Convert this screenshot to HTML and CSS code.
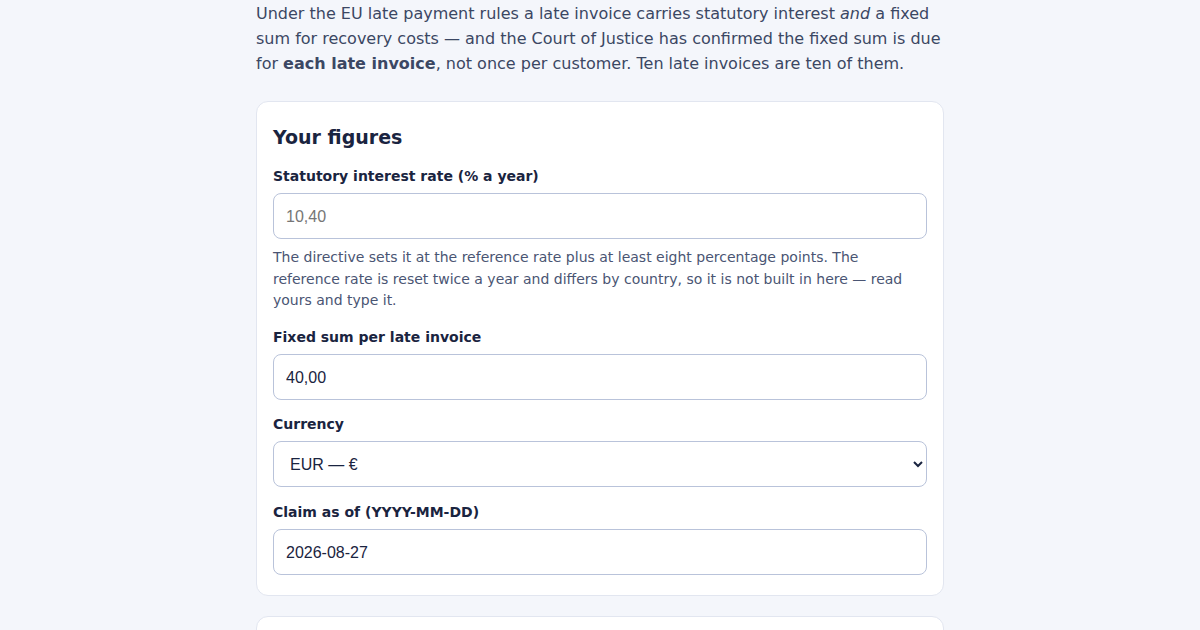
FILE: index.html
```html
<!DOCTYPE html>
<html lang="en">
<head>
    <meta charset="UTF-8">
    <meta name="viewport" content="width=device-width, initial-scale=1.0">
    <title>Late payment claim calculator</title>
    <link rel="stylesheet" href="styles.css">
</head>
<body>
    <main class="page">
        <p class="intro">
            Under the EU late payment rules a late invoice carries statutory interest <em>and</em> a fixed
            sum for recovery costs — and the Court of Justice has confirmed the fixed sum is due
            for <strong>each late invoice</strong>, not once per customer. Ten late invoices are ten of them.
        </p>

        <section class="card">
            <h2>Your figures</h2>

            <div class="field">
                <label for="rate">Statutory interest rate (% a year)</label>
                <input type="text" id="rate" class="control" placeholder="10,40">
                <p class="hint">The directive sets it at the reference rate plus at least eight percentage points. The reference rate is reset twice a year and differs by country, so it is not built in here — read yours and type it.</p>
            </div>

            <div class="field">
                <label for="fixed">Fixed sum per late invoice</label>
                <input type="text" id="fixed" class="control" value="40,00">
            </div>

            <div class="field">
                <label for="currency">Currency</label>
                <select id="currency" class="control">
                    <option>EUR — €</option>
                    <option>GBP — £</option>
                    <option>USD — $</option>
                </select>
            </div>

            <div class="field">
                <label for="asof">Claim as of (YYYY-MM-DD)</label>
                <input type="text" id="asof" class="control" value="2026-08-27">
            </div>
        </section>

        <section class="card"></section>
    </main>
</body>
</html>
```

FILE: styles.css
```css
body {
    margin: 0;
    background: #f4f6fb;
    font-family: "DejaVu Sans", sans-serif;
    color: #1a2440;
}
.page {
    max-width: 688px;
    margin: 0 auto;
    padding-top: 1px;
}
.intro {
    margin: 0 0 25px;
    font-size: 16px;
    line-height: 25px;
    color: #3b4763;
}
.card {
    background: #fff;
    border: 1px solid #e2e6f0;
    border-radius: 12px;
    padding: 23px 16px 20.5px;
    margin-bottom: 20px;
    display: flex;
    flex-direction: column;
    gap: 14.33px;
}
.card h2 {
    margin: 0 0 1.67px;
    font-size: 19px;
    line-height: 25px;
    color: #1a2440;
}
.field {
    display: flex;
    flex-direction: column;
}
.field label {
    font-size: 14px;
    font-weight: bold;
    line-height: 21px;
    margin-bottom: 6px;
    color: #1a2440;
}
.control {
    box-sizing: border-box;
    width: 100%;
    height: 46px;
    padding: 13px 12px 11px;
    font-family: "Liberation Sans", Arial, sans-serif;
    font-size: 16px;
    line-height: 20px;
    color: #1a2440;
    background: #fff;
    border: 1px solid #b9c3da;
    border-radius: 8px;
}
.control::placeholder {
    color: #767676;
}
select.control {
    padding: 1px 8px 0 12px;
}
.hint {
    margin: 8px 0 1px;
    font-size: 14px;
    line-height: 21.6px;
    color: #4a5573;
}
```
